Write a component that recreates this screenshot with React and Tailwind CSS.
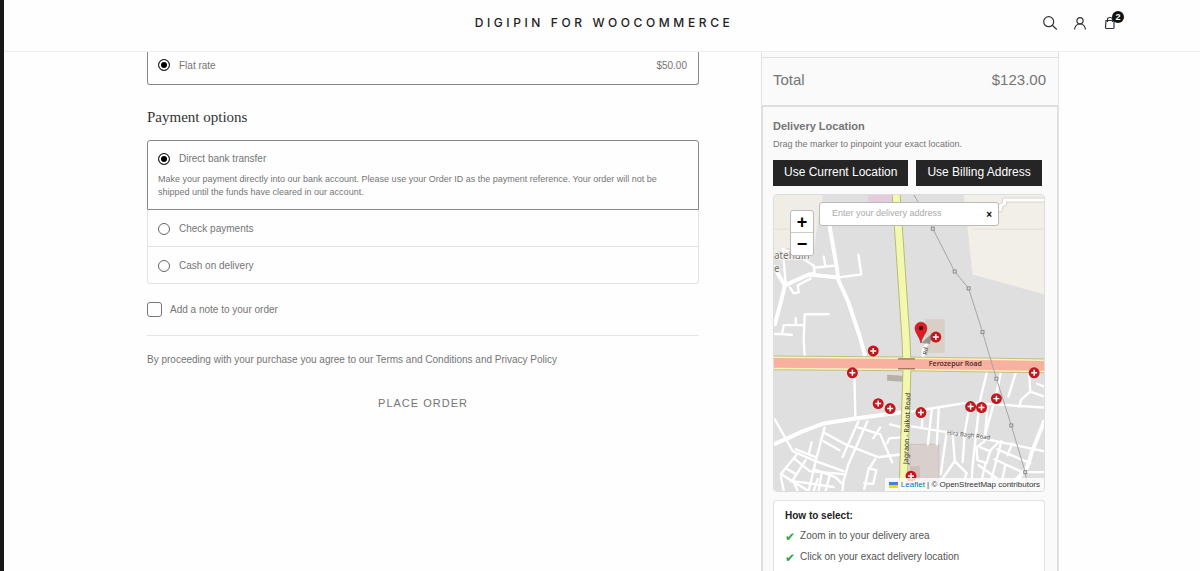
import { useState } from 'react';

const PAYMENT_METHODS = [
  {
    id: 'bacs',
    label: 'Direct bank transfer',
    description:
      'Make your payment directly into our bank account. Please use your Order ID as the payment reference. Your order will not be shipped until the funds have cleared in our account.'
  },
  { id: 'cheque', label: 'Check payments' },
  { id: 'cod', label: 'Cash on delivery' }
];

const STEPS = ['Zoom in to your delivery area', 'Click on your exact delivery location'];

// hospitals / clinics on the map
const CLINICS = [
  [100, 157], [163, 143], [79, 179], [105, 210], [117, 215], [148, 219],
  [198, 213], [209, 214], [224, 205], [262, 179], [138, 283]
];

const PYLONS = [[160, 34], [182, 77], [196, 94], [210, 138], [224, 185], [239, 232], [253, 279]];

const WIDE_STREETS = [
  'M56 31 63 71 65 86 75 108 86 141 92 163',
  'M0 72 11 91 7 108 1 130',
  'M11 91 35 80 65 83',
  'M0 251 29 238 50 230 82 225 127 219',
  'M272 228 260 258 255 274 244 288'
];

const STREETS = [
  'M65 83 88 80 85 60',
  'M12 91 9 57M8 54 27 63 40 71 41 78 35 80M42 73 63 71M52 72 50 62',
  'M37 84 24 91 25 98 20 99 16 93',
  'M55 120H31L30 146 31 162M30 131H10L8 140H1M8 140 18 141M22 124V131',
  'M81 183 82 224',
  'M1 226 19 258 42 268 70 278',
  'M51 234 42 268 35 298',
  'M50 239 72 251 105 264 129 261',
  'M85 228 69 264M94 228 75 271 70 288 69 298',
  'M85 234 107 241 119 269M107 234 100 245',
  'M50 248 66 257M22 256 42 264M38 249 35 261',
  'M24 260 7 281 35 298M12 275 22 281M20 265 36 278 70 281',
  'M32 267 19 287 24 298M7 284 10 298M40 276 62 284 68 290M44 286 40 298',
  'M17 288 34 290 60 294M48 280 45 298M56 283 52 298',
  'M102 266 95 277 91 296M95 275 103 277 100 291 91 290',
  'M117 231 129 234M129 244 116 245 114 250',
  'M139 218 195 209 272 214',
  'M215 176 207 209 200 273 199 288M229 176 224 200 212 244',
  'M244 177 236 203M257 177 258 198 249 206 247 213M258 198 272 203M265 190 272 193',
  'M139 233 175 239 215 246 272 258',
  'M150 216 149 234M159 215 155 251M166 214 164 251',
  'M174 238 168 281M180 240 182 268 168 288M197 212 192 240 190 269',
  'M182 268 194 280 191 290M215 214 212 248 204 254 205 267 214 270 218 257 226 249',
  'M208 254 218 258M229 248 218 290M225 256 258 270M222 266 250 279 242 288',
  'M240 250 235 262M213 270 209 288M206 272 224 285M233 272 229 290M253 279H272'
];

const DeliveryMap = () => (
  <svg
    viewBox="0 0 272 298"
    preserveAspectRatio="xMidYMid slice"
    className="block w-full h-full"
    fontFamily="'Noto Sans', sans-serif"
    role="img"
    aria-label="Delivery map"
  >
    <rect width="272" height="298" fill="#e0dfe0" />
    <path d="M0 0H49V12L45 22 40 58 15 53 6 55 0 60Z" fill="#efede6" />
    <path d="M191 0H272V100L200 80 195 34Z" fill="#f2efe9" />
    <rect x="95" width="26" height="9" fill="#e3cddc" />
    <path d="M0 34.500H40M200 34.500H272" stroke="#e3e1da" />
    <path d="M152 125H172V159H152Z" fill="#d8cfc6" />
    <path d="M137 251H166V288H137Z" fill="#d9cfcc" stroke="#cfc0bb" />
    <path d="M137 273H147V288H137Z" fill="#cdbfbb" />
    <path d="M114 181 130 182V188L114 187Z" fill="#b8afa5" />

    <g fill="none" stroke="#fff" strokeLinejoin="round" strokeLinecap="round">
      <path d="M228 15V11L232 9V5H272" stroke="#d6d4d0" strokeWidth="5" />
      <path d="M228 15V11L232 9V5H272" strokeWidth="3" />
      {STREETS.map(d => (
        <path key={d} d={d} strokeWidth="2.400" />
      ))}
      {WIDE_STREETS.map(d => (
        <path key={d} d={d} strokeWidth="4" />
      ))}
      <path d="M150 163 151 154 154 150" strokeWidth="3" />
    </g>

    {/* main roads */}
    <g fill="none">
      <path d="M0 169 134 170 272 172" stroke="#c2bf7c" strokeWidth="15" />
      <path d="M123 -2 133 146 134 174 130 300" stroke="#b9bb72" strokeWidth="9" />
      <path d="M0 169 134 170 272 172" stroke="#f7f3bd" strokeWidth="13" />
      <path d="M123 -2 133 146 134 174 130 300" stroke="#f3f8b0" strokeWidth="7" />
      <path d="M0 169 134 170 272 172" stroke="#f8b0a0" strokeWidth="10" />
      <path d="M125 165H142M125 175H142" stroke="#7c5348" />
    </g>

    <path
      d="M141 0 147 10 160 34 182 77 196 94 210 138 224 185 239 232 253 279 256 298"
      fill="none"
      stroke="#a5a5a5"
    />
    {PYLONS.map(([x, y]) => (
      <rect key={y} x={x - 1.5} y={y - 1.5} width="3" height="3" fill="#e0dfe0" stroke="#8a8a8a" />
    ))}

    <g fill="#777" stroke="#f4f2ee" strokeWidth="2" paintOrder="stroke" fontSize="10">
      <text x="0" y="64">atehuin</text>
      <text x="0" y="78">e</text>
    </g>
    <g fill="#444" fontSize="7">
      <text x="156" y="172" fontWeight="600" fill="#5a2f28">Ferozepur Road</text>
      <text transform="translate(135 271) rotate(-88)" fontWeight="500">Jagraon - Raikot Road</text>
      <text transform="translate(174 241) rotate(7)" fontSize="6" fill="#555">Hira Bagh Road</text>
      <text transform="translate(154 161) rotate(-80)" fontSize="6">Rd</text>
    </g>

    {CLINICS.map(([x, y]) => (
      <g key={`${x}-${y}`}>
        <circle cx={x} cy={y} r="5.500" fill="#c4161c" />
        <path d={`M${x - 3} ${y}h6M${x} ${y - 3}v6`} stroke="#fff" strokeWidth="1.500" />
      </g>
    ))}

    {/* delivery marker */}
    <path d="M148 149 160 139 157 150Z" fill="#555" opacity=".5" />
    <path d="M148 149C147 143 142 139 142 134a6 6 0 0 1 12 0C154 139 149 143 148 149Z" fill="#dd1c25" stroke="#a8141b" strokeWidth=".6" />
    <circle cx="148" cy="134" r="2.200" fill="#3a0c0e" />
  </svg>
);

const SearchIcon = () => (
  <svg viewBox="0 0 16 16" className="size-4" fill="none" stroke="#333" strokeWidth="1.200">
    <circle cx="6.700" cy="6.700" r="5" />
    <path d="M10.300 10.300 14.800 14.500" />
  </svg>
);

const UserIcon = () => (
  <svg viewBox="0 0 16 16" className="size-4" fill="none" stroke="#333" strokeWidth="1.200">
    <circle cx="8" cy="5.700" r="3.100" />
    <path d="M2.500 14.500C3 11 5 9 8 9s5 2 5.500 5.500" />
  </svg>
);

const BagIcon = () => (
  <svg viewBox="0 0 16 16" className="size-4" fill="none" stroke="#333" strokeWidth="1.200">
    <path d="M4 5.500H12V12.500Q12 13.500 11 13.500H4.500Q3.500 13.500 3.500 12.500Z" />
    <path d="M5.500 7V4.500Q5.500 2.500 8 2.500T10.500 4.500V7" />
  </svg>
);

const Header = () => (
  <header className="grid grid-cols-[1fr_auto_1fr] items-center h-[52px] shrink-0 pb-1.5 border-b border-[#ededed]">
    <a
      href="#home"
      className="col-start-2 pl-1 font-[Inter,sans-serif] text-[12px] leading-4 font-medium tracking-[.3em] text-[#222]"
    >
      DIGIPIN FOR WOOCOMMERCE
    </a>
    <nav className="flex justify-end gap-3.5 pr-[82px]">
      <button type="button" aria-label="Search"><SearchIcon /></button>
      <button type="button" aria-label="Account"><UserIcon /></button>
      <button type="button" aria-label="Cart" className="relative">
        <BagIcon />
        <span className="absolute -top-1 left-2.5 size-3 rounded-full bg-[#111] text-white text-[9px] leading-3 font-bold">
          2
        </span>
      </button>
    </nav>
  </header>
);

const Radio = props => (
  <input
    type="radio"
    className="appearance-none size-3 shrink-0 rounded-full border border-[#666] bg-white checked:border-[#222] checked:bg-black checked:shadow-[inset_0_0_0_2px_white]"
    {...props}
  />
);

const Checkout = () => {
  const [method, setMethod] = useState('bacs');

  return (
    <form className="flex-1 min-w-0" onSubmit={e => e.preventDefault()}>
      <div className="flex items-center h-[33px] pl-[10px] pr-[11px] pb-1.5 border border-t-0 border-[#888] rounded-b-[3px]">
        <label className="flex items-center gap-[9px]">
          <Radio name="shipping" defaultChecked />
          Flat rate
        </label>
        <span className="ml-auto">$50.00</span>
      </div>

      <h2 className="mt-[21px] mb-3 font-['Liberation_Serif',serif] text-[15px] leading-[22px] text-[#333]">
        Payment options
      </h2>
      <div>
        {PAYMENT_METHODS.map(({ id, label, description }) => (
          <div
            key={id}
            className={
              description
                ? 'px-[10px] py-2.5 border border-[#888] rounded-t-[3px]'
                : 'px-[10px] pt-[11px] pb-2.5 border border-t-0 border-[#e2e2e2] last:rounded-b-[3px]'
            }
          >
            <label className="flex items-center gap-[9px] leading-[15px]">
              <Radio name="payment" checked={method === id} onChange={() => setMethod(id)} />
              {label}
            </label>
            {description && <p className="mt-[7px] text-[9px] leading-[13px]">{description}</p>}
          </div>
        ))}
      </div>

      <label className="flex items-center gap-2 mt-[17px] h-4">
        <input
          type="checkbox"
          className="appearance-none size-[15px] border border-[#777] rounded-[3px] checked:bg-[#222]"
        />
        Add a note to your order
      </label>

      <p className="mt-[18px] pt-4 border-t border-[#e5e5e5] leading-4">
        By proceeding with your purchase you agree to our Terms and Conditions and Privacy Policy
      </p>
      <button type="submit" className="block w-full mt-6 text-[11px] leading-[22px] tracking-[1px]">
        PLACE ORDER
      </button>
    </form>
  );
};

const DeliveryPanel = () => {
  const [address, setAddress] = useState('');

  return (
    <section className="flex flex-col flex-1 pl-[10px] pr-3 pt-[11px] border border-t-2 border-b-0 border-[#dedede]">
      <h3 className="text-[11px] leading-4 font-bold">Delivery Location</h3>
      <p className="mt-[3px] text-[9px] leading-[14px]">Drag the marker to pinpoint your exact location.</p>
      <div className="flex gap-2 mt-[9px] text-[12px] text-white">
        <button type="button" className="h-[26px] px-[11px] pb-0.5 bg-[#252525]">Use Current Location</button>
        <button type="button" className="h-[26px] px-[11px] pb-0.5 bg-[#252525]">Use Billing Address</button>
      </div>

      <div className="relative h-[298px] shrink-0 mt-2 border border-[#ddd] rounded overflow-hidden">
        <DeliveryMap />
        <div className="absolute left-4 top-[15px] w-6 flex flex-col bg-white border border-[#bbb] rounded-[3px] text-black text-[18px] font-bold">
          <button type="button" aria-label="Zoom in" className="h-[22px] leading-[22px] border-b border-[#ccc]">+</button>
          <button type="button" aria-label="Zoom out" className="h-[22px] leading-[20px]">−</button>
        </div>
        <div className="absolute left-[45px] right-[45px] top-[7px] h-6 flex items-center bg-white border border-[#bbb] rounded-[3px] pl-3 pr-1.5">
          <input
            type="text"
            aria-label="Delivery address"
            placeholder="Enter your delivery address"
            value={address}
            onChange={e => setAddress(e.target.value)}
            className="flex-1 min-w-0 text-[9px] outline-none placeholder:text-[#aaa]"
          />
          <button type="button" aria-label="Clear" className="text-[10px] font-bold text-black" onClick={() => setAddress('')}>
            ×
          </button>
        </div>
        <div className="absolute right-0 bottom-0 flex items-center gap-[3px] px-1 bg-white/80 text-[8px] leading-[13px] text-[#333]">
          <svg viewBox="0 0 9 6" className="w-[9px] h-1.5">
            <path fill="#4c7be1" d="M0 0h9v3H0z" />
            <path fill="#ffd500" d="M0 3h9v3H0z" />
          </svg>
          <span>
            <a href="#leaflet" className="text-[#0078a8]">Leaflet</a> | © OpenStreetMap contributors
          </span>
        </div>
      </div>

      <div className="flex-1 mt-2 px-[11px] pt-2 bg-white border border-b-0 border-[#e2e2e2] rounded-t-[3px]">
        <h4 className="leading-[14px] font-bold text-[#222]">How to select:</h4>
        <ul className="mt-1.5">
          {STEPS.map(step => (
            <li key={step} className="flex gap-[5px] h-[21px] leading-[14px] text-[#555]">
              <span className="text-[12px] leading-4 font-bold text-[#28a745] font-['DejaVu_Sans',sans-serif]">✔</span>
              {step}
            </li>
          ))}
        </ul>
      </div>
    </section>
  );
};

const App = () => (
  <div className="flex h-screen overflow-hidden bg-[#fefefe] font-['Liberation_Sans',Arial,sans-serif] text-[10px] text-[#757575]">
    <div className="w-1 shrink-0 bg-[#1a1816]" />
    <div className="flex flex-col flex-1 min-w-0">
      <Header />
      <main className="flex flex-1 min-h-0 gap-[62px] w-full max-w-[914px] mx-auto pl-0.5">
        <Checkout />
        <aside className="flex flex-col w-[298px] shrink-0 bg-[#fafafa] border-x border-[#e2e2e2]">
          <div className="flex justify-between mt-[5px] pl-[11px] pr-3 pt-3 h-[48px] border-t border-[#dedede] text-[15px] leading-5">
            <span>Total</span>
            <span>$123.00</span>
          </div>
          <DeliveryPanel />
        </aside>
      </main>
    </div>
  </div>
);

export default App;
